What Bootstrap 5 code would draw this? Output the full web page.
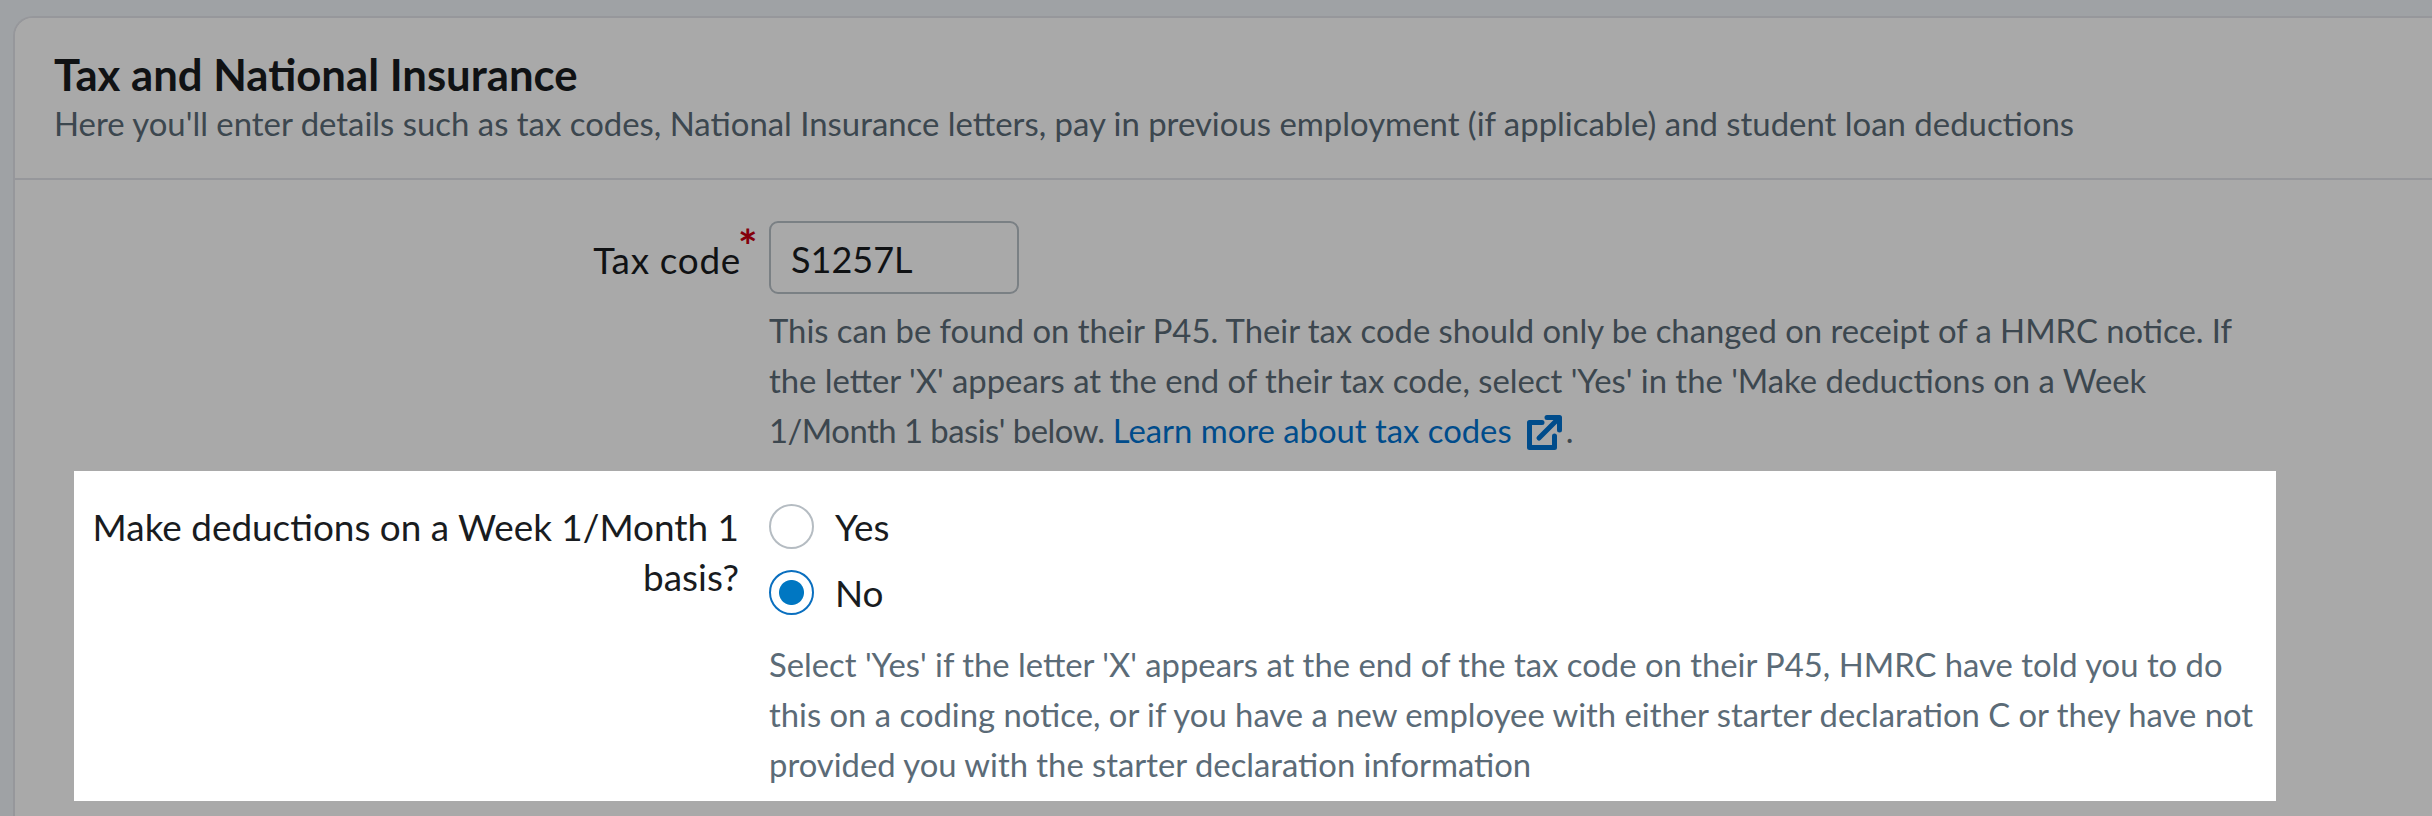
<!doctype html>
<html lang="en"><head><meta charset="utf-8"><title>Tax and National Insurance</title>
<link href="https://cdn.jsdelivr.net/npm/bootstrap@5.3.0/dist/css/bootstrap.min.css" rel="stylesheet">
<style>
html,body{height:100%;overflow:hidden}
body{background:#f0f4f9;font-family:Lato,"Liberation Sans",sans-serif;color:#191c1f;position:relative}
.tour-page{padding:16px 0 0 13px;height:816px;overflow:hidden}
.tour-backdrop{position:absolute;inset:0;background:rgba(0,0,0,.337);z-index:10}
.tax-card{border:2px solid #e2e4ea;border-width:2px 0 0 2px;border-radius:20px 0 0 0;background:#fff;height:800px}
.tax-head{background:#fff;border-bottom:2px solid #e2e4ea;padding:31px 0 30px 39px;border-radius:18px 0 0 0!important}
.tax-title{font-size:43.7px;line-height:50px;font-weight:700;margin:0 0 1px;color:#191c1f}
.tax-sub{font-size:32.9px;line-height:48px;margin:0;color:#5b6b77}
.tax-body{padding:41px 170px 0 59px!important}
.field-row{display:flex;gap:30px}
.field-label{width:665px;flex:none;margin:0;padding:3px 0 0;font-size:36.9px;line-height:50px;text-align:right;color:#191c1f}
.tax-code-label{padding:14px 1px 0 0;letter-spacing:.7px}
.req-star{color:#c80012;font-weight:700;font-size:46px;line-height:0;margin:0 -17px 0 -3px;vertical-align:11px;display:inline-block;width:17px;letter-spacing:0}
.field-ctl{flex:1 1 0;min-width:0}
.tax-input{width:250px;height:73px;border:2px solid #b9c1c8;border-radius:9px;padding:3px 20px 0;font-size:36px;color:#191c1f;background:#fff;font-family:inherit}
.field-help{font-size:32.8px;line-height:50px;color:#5b6b77;margin:0}
.help-top{margin-top:12px}
.help-low{margin-top:23px}
.tight-run{letter-spacing:-.5px}
.help-link{color:#0073d2;text-decoration:none}
.ext-icon{width:35px;height:35px;margin:0 4px 0 15px;vertical-align:-7px}
.spot-row{position:relative;z-index:20;background:#fff;margin:15px -14px 0 0;padding:28px 14px 11px 0}
.radio-list{padding-top:2px}
.radio-row{display:flex;align-items:center;gap:21px;padding:0;margin:0 0 16px;height:50px}
.radio-row .form-check-input{width:45px;height:45px;float:none;margin:0;border:2px solid #b5bcc2;box-shadow:none;flex:none}
.radio-row .form-check-input:checked{background:#fff radial-gradient(circle at center,#0077c2 0 12px,transparent 13px);border-color:#0a6fbf}
.radio-row .form-check-label{font-size:36.9px;line-height:46px;padding-top:2px;color:#191c1f}
.radio-last{margin-bottom:0}
</style></head>
<body>
<div class="tour-page">
 <div class="card tax-card">
  <div class="card-header tax-head">
   <h1 class="tax-title">Tax and National Insurance</h1>
   <p class="tax-sub">Here you'll enter details such as tax codes, National Insurance letters, pay in previous employment (if applicable) and student loan deductions</p>
  </div>
  <div class="card-body tax-body">
   <div class="field-row">
    <label class="field-label tax-code-label" for="taxcode">Tax code<span class="req-star">*</span></label>
    <div class="field-ctl">
     <input id="taxcode" class="form-control tax-input" value="S1257L">
     <p class="field-help help-top">This can be found on their P45. Their tax code should only be changed on receipt of a HMRC notice. If the letter 'X' appears at the end of their tax code, select 'Yes' in the 'Make deductions on a Week <span class="tight-run">1/Month 1 basis' below.</span> <a class="help-link" href="#">Learn more about tax codes<svg class="ext-icon" viewBox="0 0 35 35" fill="none" stroke="currentColor" stroke-width="5" stroke-linecap="round" stroke-linejoin="round" aria-hidden="true"><path d="M15 7.5H2.5V32.5H27.5V21"/><path d="M12 23 31 4"/><path d="M20 2.5H32.5V15"/></svg></a>.</p>
    </div>
   </div>
   <div class="field-row spot-row">
    <div class="field-label">Make deductions on a Week 1/Month 1 basis?</div>
    <div class="field-ctl">
     <div class="radio-list">
      <div class="form-check radio-row"><input class="form-check-input" type="radio" name="wk1" id="wk1y"><label class="form-check-label" for="wk1y">Yes</label></div>
      <div class="form-check radio-row radio-last"><input class="form-check-input" type="radio" name="wk1" id="wk1n" checked><label class="form-check-label" for="wk1n">No</label></div>
     </div>
     <p class="field-help help-low">Select 'Yes' if the letter 'X' appears at the end of the tax code on their P45, HMRC have told you to do this on a coding notice, or if you have a new employee with either starter declaration C or they have not provided you with the starter declaration information</p>
    </div>
   </div>
  </div>
 </div>
</div>
<div class="tour-backdrop"></div>
</body></html>
